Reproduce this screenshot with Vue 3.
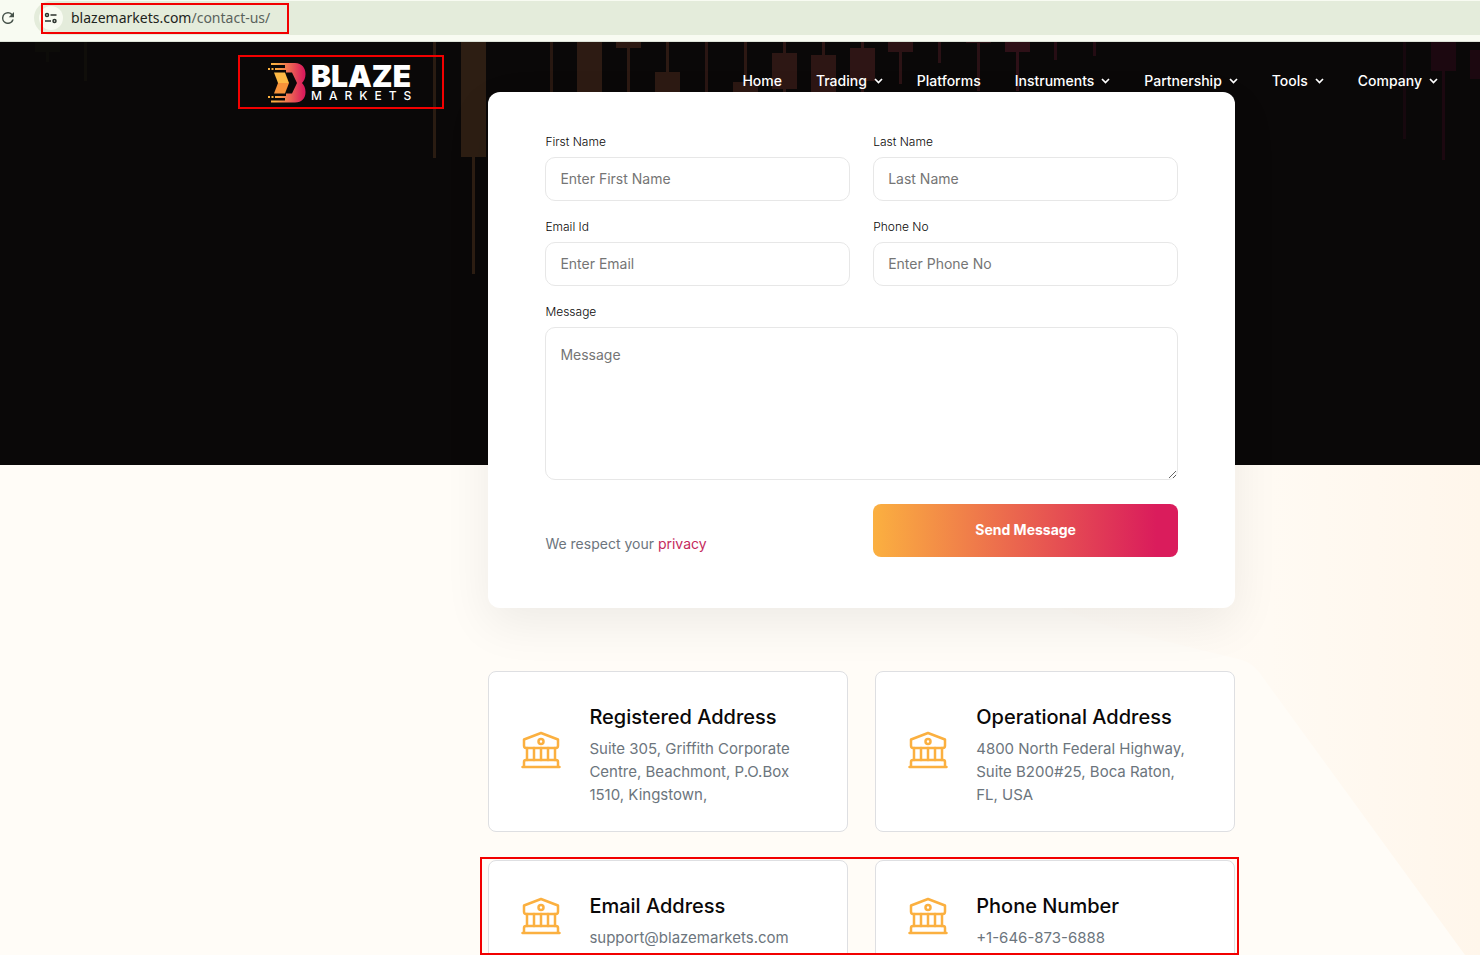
<template>
  <div class="page">
    <div class="browser-bar">
      <button class="reload" type="button" aria-label="Reload">
        <svg width="12" height="12" viewBox="4 4 16 16" fill="#46524a">
          <path d="M17.65 6.35A7.96 7.96 0 0 0 12 4a8 8 0 1 0 7.73 10h-2.200A6 6 0 1 1 12 6c1.660 0 3.140.69 4.220 1.780L13 11h7V4z" />
        </svg>
      </button>
      <div class="address">
        <button class="site-info" type="button" aria-label="Site information">
          <svg width="14" height="12" viewBox="0 0 14 12" fill="none" stroke="#2c332e" stroke-width="1.5">
            <circle cx="3" cy="3" r="1.500" />
            <path d="M6.500 3h6M1 9h6" />
            <circle cx="10.500" cy="9" r="1.500" />
          </svg>
        </button>
        <span class="url">blazemarkets.com<span class="path">/contact-us/</span></span>
        <span class="mark mark-url"></span>
      </div>
    </div>

    <div class="site">
      <div class="hero">
        <svg class="candles" width="1480" height="423" aria-hidden="true">
          <g v-for="(c, i) in candles" :key="i" :fill="c.color">
            <rect :x="c.x - 1" y="0" width="3" :height="c.wick" />
            <rect v-if="c.body" :x="c.x - 12" :y="c.body[0]" width="25" :height="c.body[1]" />
          </g>
        </svg>
      </div>

      <svg class="shape" width="700" height="490" aria-hidden="true">
        <defs>
          <linearGradient id="glow" x1="0" y1="0" x2="1" y2="0">
            <stop offset="0.4" stop-color="#fffaf4" stop-opacity="0.4" />
            <stop offset="0.65" stop-color="#fffaf3" />
            <stop offset="1" stop-color="#fff6eb" />
          </linearGradient>
        </defs>
        <path d="M100 0H700V490H685L484 214Q474 198 462 195L360 170Q200 130 100 0Z" fill="url(#glow)" />
      </svg>

      <header class="header">
        <a class="logo" href="#" aria-label="Blaze Markets">
          <svg width="38" height="40" viewBox="0 0 38 40">
            <defs>
              <linearGradient id="flame" x1="0" y1="0" x2="1" y2="0">
                <stop offset="0.1" stop-color="#fbb040" />
                <stop offset="0.5" stop-color="#ee6f52" />
                <stop offset="0.95" stop-color="#da1c5c" />
              </linearGradient>
            </defs>
            <path
              d="M3 0H27C34 0 37.500 5 37.500 11C37.500 15 36 18 34 20C36 22 37.500 25 37.500 29C37.500 35 34 39.500 27 39.500H3V37.500H17V35H7V33H18V30.500H24L29 20L24 9.500H18V7H7V5H17V2H3Z"
              fill="url(#flame)"
            />
            <path d="M0 5h2v2H0zM3.500 5h2v2h-2zM0 33h2v2H0zM3.500 33h2v2h-2z" fill="#fbb040" />
            <path d="M6 9.500H17L21 20H10Z" fill="#fdb945" />
            <path d="M10 20H21L17 30.500H6Z" fill="#f7923a" />
          </svg>
          <span class="wordmark">
            <span class="word-top">BLAZE</span>
            <span class="word-bottom">MARKETS</span>
          </span>
          <span class="mark mark-logo"></span>
        </a>
        <nav class="nav">
          <a v-for="item in menu" :key="item.label" href="#">
            {{ item.label }}
            <svg v-if="item.sub" width="9" height="6" viewBox="0 0 9 6" fill="none" stroke="#fff" stroke-width="1.700">
              <path d="M1 1L4.500 4.500L8 1" />
            </svg>
          </a>
        </nav>
      </header>

      <main class="content">
        <form class="contact" @submit.prevent>
          <div v-for="field in fields" :key="field.id" class="field">
            <label :for="field.id">{{ field.label }}</label>
            <input :id="field.id" :type="field.type" :placeholder="field.placeholder" />
          </div>
          <div class="field wide">
            <label for="message">Message</label>
            <textarea id="message" placeholder="Message"></textarea>
          </div>
          <div class="actions">
            <p>We respect your <a href="#">privacy</a></p>
            <button type="submit">Send Message</button>
          </div>
        </form>

        <section v-for="(row, r) in cards" :key="r" class="cards">
          <article v-for="card in row" :key="card.title" class="card">
            <svg class="bank" width="40" height="38" viewBox="0 0 40 38" fill="none" stroke="#fbb040" stroke-width="2.500" stroke-linejoin="round" stroke-linecap="round">
              <path d="M3 8.500L20 2L37 8.500V14.500Q37 17 35 17H5Q3 17 3 14.500Z" />
              <circle cx="20" cy="10.500" r="2.500" />
              <path d="M6 17V29M13 17V29M20 17V29M27 17V29M34 17V29" />
              <path d="M3 36V31Q3 29 5 29H35Q37 29 37 31V36M1.500 36H38.500" />
            </svg>
            <div class="card-text">
              <h2>{{ card.title }}</h2>
              <p>{{ card.text }}</p>
            </div>
          </article>
          <span v-if="r === 1" class="mark mark-cards"></span>
        </section>
      </main>
    </div>
  </div>
</template>

<script setup>
const menu = [
  { label: 'Home' },
  { label: 'Trading', sub: true },
  { label: 'Platforms' },
  { label: 'Instruments', sub: true },
  { label: 'Partnership', sub: true },
  { label: 'Tools', sub: true },
  { label: 'Company', sub: true }
]

const fields = [
  { id: 'first-name', label: 'First Name', type: 'text', placeholder: 'Enter First Name' },
  { id: 'last-name', label: 'Last Name', type: 'text', placeholder: 'Last Name' },
  { id: 'email', label: 'Email Id', type: 'email', placeholder: 'Enter Email' },
  { id: 'phone', label: 'Phone No', type: 'tel', placeholder: 'Enter Phone No' }
]

const cards = [
  [
    { title: 'Registered Address', text: 'Suite 305, Griffith Corporate Centre, Beachmont, P.O.Box 1510, Kingstown,' },
    { title: 'Operational Address', text: '4800 North Federal Highway, Suite B200#25, Boca Raton, FL, USA' }
  ],
  [
    { title: 'Email Address', text: 'support@blazemarkets.com' },
    { title: 'Phone Number', text: '+1-646-873-6888' }
  ]
]

// body is [top, height]
const candles = [
  { x: 47, wick: 20, body: [0, 10], color: '#0d0c09' },
  { x: 85, wick: 39, color: '#100e0a' },
  { x: 434, wick: 116, color: '#2a1c12' },
  { x: 473, wick: 232, body: [0, 115], color: '#2d1e13' },
  { x: 551, wick: 60, color: '#281811' },
  { x: 589, wick: 60, body: [0, 60], color: '#2d1b13' },
  { x: 628, wick: 60, body: [0, 6], color: '#2d1a13' },
  { x: 667, wick: 60, body: [30, 30], color: '#2d1a13' },
  { x: 706, wick: 60, color: '#2a1613' },
  { x: 745, wick: 60, body: [40, 20], color: '#2c1813' },
  { x: 784, wick: 60, body: [11, 36], color: '#2d1714' },
  { x: 823, wick: 60, body: [13, 47], color: '#2d1614' },
  { x: 862, wick: 60, body: [6, 33], color: '#2e1515' },
  { x: 900, wick: 42, body: [0, 10], color: '#2c1315' },
  { x: 939, wick: 21, color: '#2a1115' },
  { x: 978, wick: 49, body: [0, 1], color: '#2a1115' },
  { x: 1017, wick: 49, body: [0, 10], color: '#2e1017' },
  { x: 1055, wick: 18, color: '#260d14' },
  { x: 1094, wick: 14, color: '#240c13' },
  { x: 1404, wick: 97, color: '#17080e' },
  { x: 1443, wick: 118, body: [0, 29], color: '#1c0810' },
  { x: 1482, wick: 60, body: [8, 29], color: '#1c0810' }
]
</script>

<style>
body {
  margin: 0;
}
</style>

<style scoped>
* {
  box-sizing: border-box;
}

.page {
  display: flex;
  flex-direction: column;
  height: 100vh;
  overflow: hidden;
  font-family: Inter, "Liberation Sans", sans-serif;
}

button {
  border: 0;
  padding: 0;
  cursor: pointer;
}

a {
  text-decoration: none;
}

/* Browser bar */
.browser-bar {
  display: flex;
  flex-shrink: 0;
  height: 42px;
  gap: 20px;
  align-items: flex-start;
  padding-left: 2px;
  background: #f8fbf2;
  border-bottom: 1px solid #dde3d8;
}

.reload {
  display: flex;
  margin-top: 12px;
  background: none;
}

.address {
  position: relative;
  display: flex;
  flex: 1;
  align-items: center;
  gap: 8px;
  height: 34px;
  margin-top: 1px;
  padding-left: 5px;
  border-radius: 17px 0 0 17px;
  background: #e4ecdb;
}

.site-info {
  display: flex;
  align-items: center;
  justify-content: center;
  width: 24px;
  height: 24px;
  border-radius: 50%;
  background: #f8fbf2;
}

.url {
  font-family: "Noto Sans", "Open Sans", sans-serif;
  font-size: 14px;
  line-height: 20px;
  color: #1e2420;
}

.path {
  color: #5a635c;
}

/* Red highlight frames */
.mark {
  position: absolute;
  border: 2px solid #f20000;
  pointer-events: none;
}

.mark-url {
  top: 2px;
  left: 7px;
  width: 248px;
  height: 31px;
}

.mark-logo {
  top: -8px;
  left: -30px;
  width: 206px;
  height: 54px;
}

.mark-cards {
  top: -3px;
  left: -8px;
  right: -4px;
  height: 98px;
}

/* Site */
.site {
  position: relative;
  flex: 1;
  overflow: hidden;
  background: #fffcf7;
}

.hero {
  position: absolute;
  inset: 0 0 auto;
  height: 423px;
  overflow: hidden;
  background: #0a0808;
}

.candles {
  display: block;
}

.shape {
  position: absolute;
  top: 423px;
  right: 0;
}

.header {
  position: relative;
  z-index: 2;
  display: flex;
  align-items: center;
  justify-content: space-between;
  height: 78px;
  padding: 0 42px 0 268px;
}

.logo {
  position: relative;
  display: flex;
  gap: 5px;
  margin-top: 4px;
  color: #fff;
}

.wordmark {
  display: flex;
  flex-direction: column;
}

.word-top {
  font-size: 30px;
  font-weight: 900;
  line-height: 26px;
}

.word-bottom {
  font-size: 12px;
  font-weight: 500;
  line-height: 14px;
  letter-spacing: 7px;
}

.nav {
  display: flex;
  gap: 34px;
}

.nav a {
  display: flex;
  align-items: center;
  gap: 7px;
  font-size: 14px;
  font-weight: 500;
  line-height: 20px;
  color: #fff;
}

.content {
  position: relative;
  margin: -28px 245px 0 33%;
}

/* Contact form */
.contact {
  display: grid;
  grid-template-columns: 1fr 1fr;
  gap: 17px 23px;
  padding: 41px 57px 51px;
  border-radius: 12px;
  background: #fff;
  box-shadow: 0 16px 48px rgba(0, 0, 0, 0.07);
}

.field {
  display: flex;
  flex-direction: column;
  gap: 6px;
}

.wide,
.actions {
  grid-column: 1 / -1;
}

label {
  font-size: 12px;
  font-weight: 300;
  line-height: 18px;
  color: #0a0808;
}

input,
textarea {
  display: block;
  width: 100%;
  height: 44px;
  padding: 0 14px 2px;
  border: 1px solid #e7e7e7;
  border-radius: 10px;
  background: #fff;
  font-family: inherit;
  font-size: 14px;
  color: #212529;
}

textarea {
  height: 153px;
  padding: 16px 14px;
  line-height: 21px;
}

input::placeholder,
textarea::placeholder {
  color: #757575;
}

.actions {
  display: grid;
  grid-template-columns: 1fr 1fr;
  column-gap: 23px;
  align-items: end;
  margin-top: 7px;
}

.actions p {
  margin: 0;
  font-size: 14px;
  line-height: 26px;
  color: #6c757d;
}

.actions a {
  color: #c52a5c;
}

.actions button {
  height: 53px;
  padding-bottom: 2px;
  border-radius: 8px;
  background: linear-gradient(90deg, #fbb040, #da1c5c 93%);
  font-family: inherit;
  font-size: 14px;
  font-weight: 700;
  color: #fff;
}

/* Address cards */
.cards {
  position: relative;
  display: grid;
  grid-template-columns: 1fr 1fr;
  gap: 27px;
  margin-top: 28px;
}

.contact + .cards {
  margin-top: 63px;
}

.card {
  display: flex;
  align-items: center;
  gap: 28px;
  padding: 0 40px 3px 32px;
  border: 1px solid #dedfe2;
  border-radius: 8px;
  background: #fff;
}

.card-text {
  padding: 33px 0 22px;
}

.bank {
  flex-shrink: 0;
}

.card h2 {
  margin: 0 0 8px;
  font-size: 20px;
  font-weight: 500;
  line-height: 24px;
  color: #0a0808;
}

.card p {
  margin: 0;
  font-size: 15px;
  line-height: 23px;
  color: #6c757d;
}
</style>
